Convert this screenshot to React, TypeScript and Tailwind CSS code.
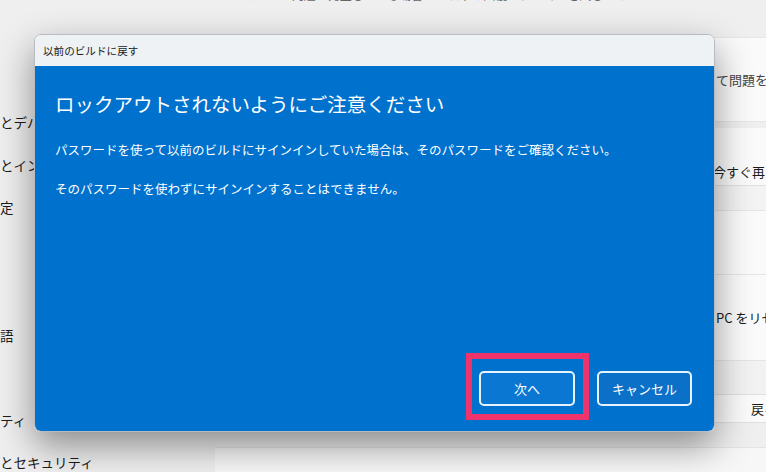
import React from "react";

const font = "[font-family:'Noto_Sans_CJK_JP','Noto_Sans',sans-serif]";

export default function App() {
  const navItems = [
    "とデバイス",
    "とインターネット",
    "定",
    "",
    "",
    "語",
    "",
    "ティ",
    "とセキュリティ",
  ];

  return (
    <div className={`relative w-[766px] h-[472px] overflow-hidden bg-[#efefef] ${font}`}>
      {/* settings page behind the dialog */}
      <div className="flex h-full">
        <nav className="w-[215px] shrink-0 flex flex-col pt-[101px] text-[13.5px] text-[#1c1c1c]">
          {navItems.map((t, i) => (
            <div key={i} className="h-[42.5px] shrink-0 flex items-center whitespace-nowrap">
              {t}
            </div>
          ))}
        </nav>
        <main className="flex-1 flex flex-col text-[13px] text-[#1c1c1c]">
          <div className="h-[37px] shrink-0 -mt-[14px] pl-[20px] text-[12px] text-[#666] whitespace-nowrap">
            この PC で問題が発生している場合は、以下の回復オプションを試してください
          </div>
          <div className="h-[85px] shrink-0 mt-[14px] bg-[#fafafa] border border-[#e6e6e6] rounded-t-[4px] flex items-center pl-[500px] whitespace-nowrap text-[#444]">
            て問題を解決してください
          </div>
          <div className="h-[6px] shrink-0" />
          <div className="h-[58px] shrink-0 bg-[#fafafa] border-x border-b border-[#e0e0e0] flex items-end pb-[4px] pl-[497px] whitespace-nowrap">
            今すぐ再インストール
          </div>
          <div className="h-[24px] shrink-0 bg-[#f3f3f3]" />
          <div className="h-[65px] shrink-0 bg-[#fafafa] border-y border-[#e6e6e6]" />
          <div className="h-[85px] shrink-0 bg-[#fafafa] flex items-center pl-[501px] whitespace-nowrap">
            PC をリセットする
          </div>
          <div className="h-[34px] shrink-0 bg-[#f2f2f2] border-t border-[#e4e4e4]" />
          <div className="h-[29px] shrink-0 bg-[#fafafa] border-y border-[#e0e0e0] flex items-center pl-[536px] whitespace-nowrap">
            戻る
          </div>
          <div className="h-[24px] shrink-0" />
          <div className="h-[40px] shrink-0 bg-[#f7f7f7] border-t border-[#e4e4e4]" />
        </main>
      </div>

      {/* dialog */}
      <div className="absolute left-[34px] top-[34px] w-[681px] h-[398px] rounded-[7px] overflow-hidden flex flex-col border border-[#b8bcc0] shadow-[0_14px_36px_rgba(0,0,0,0.42)]">
        <div className="h-[31px] shrink-0 bg-[#eef2f5] flex items-center pl-[8px] text-[10.6px] text-[#1a1a1a]">
          以前のビルドに戻す
        </div>
        <div className="relative flex-1 bg-[#0072ce] px-[20px] pt-[24px] flex flex-col text-white">
          <h1 className="text-[19.5px] leading-[28px] font-normal">
            ロックアウトされないようにご注意ください
          </h1>
          <p className="mt-[22px] text-[12.5px] leading-[20px]">
            パスワードを使って以前のビルドにサインインしていた場合は、そのパスワードをご確認ください。
          </p>
          <p className="mt-[19px] text-[12.5px] leading-[20px]">
            そのパスワードを使わずにサインインすることはできません。
          </p>
          <div className="mt-auto mb-[25px] mr-[2px] flex justify-end gap-[22px]">
            <button className="relative w-[96px] h-[35px] rounded-[5px] border-2 border-[#e6f2fc] bg-[#0a78d2] text-[13px] text-white">
              次へ
              <span className="absolute -left-[15px] -top-[20px] w-[123px] h-[67px] border-[6px] border-[#f0346b] pointer-events-none" />
            </button>
            <button className="w-[95px] h-[35px] rounded-[5px] border-2 border-[#e6f2fc] bg-[#0a70c8] text-[13px] text-white">
              キャンセル
            </button>
          </div>
        </div>
      </div>
    </div>
  );
}
